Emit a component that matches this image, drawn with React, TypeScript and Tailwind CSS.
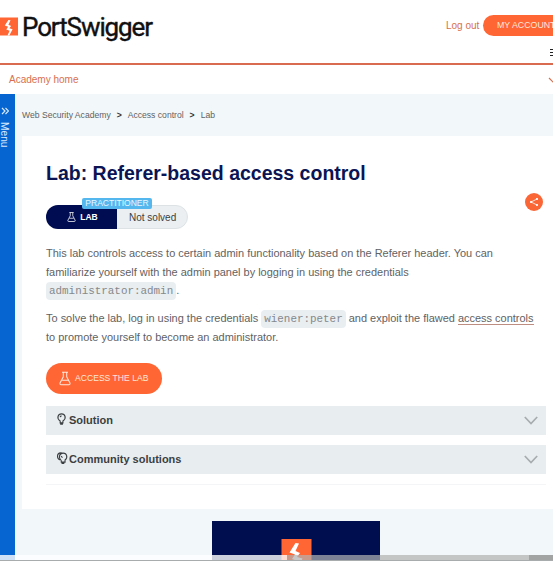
import React from "react";

const Bolt = ({ className }: { className: string }) => (
  <svg viewBox="0 0 30 30" className={className}>
    <rect width="30" height="30" fill="#ff6633" />
    <path d="M14 4 L17.500 4.500 L14 12 L18.500 14 L15.500 18 L21 19.500 L15.500 30 L12.500 30 L16 22 L10.500 20 L13.500 15.500 L8 13.500 Z" fill="#fff" />
  </svg>
);

const Flask = ({ className }: { className: string }) => (
  <svg viewBox="0 0 14 16" className={className} fill="none" stroke="currentColor" strokeWidth="1.2">
    <path d="M3.5 .8h7M5 1v5L1.2 13.2Q.7 15.2 2.5 15.2h9q1.8 0 1.3-2L9 6V1M3.5 10h7" />
  </svg>
);

const Bulb = ({ double = false }: { double?: boolean }) => (
  <svg viewBox="0 0 12 13" className="-mt-[3px] h-3 w-3 shrink-0" fill="none" stroke="#3c3f41" strokeWidth="1.200">
    {double ? (
      <path d="M3.6 8.7C0 6.5.4 1.2 4.4 1c1-.2 1.6.2 2 .5M5 9C1.800 6 3 1.500 7 1.200c4.500-.2 5.500 5 2.300 7.500V11H5.200V9M5.500 12.300h3M5 4.500l1.500 1.500" />
    ) : (
      <path d="M4 8.700C-.2 5.900 1.500 1 5.500 1s5.700 4.900 1.500 7.700v2H4zM4 12h3M4 4.500q.3-1.200 1.500-1.400" />
    )}
  </svg>
);

const Chevron = () => (
  <svg viewBox="0 0 14 9" className="h-[9px] w-3.5" fill="none" stroke="#a7acae" strokeWidth="1.700">
    <path d="M.8 1 7 7.500 13.200 1" />
  </svg>
);

const Panel = ({ label, double }: { label: string; double?: boolean }) => (
  <div className="flex h-[29px] w-[500px] items-center bg-[#e8edf0] pt-px pr-2 pl-[10px] text-[11px] font-bold text-[#3c3f41]">
    <Bulb double={double} />
    <span className="ml-[1px] flex-1">{label}</span>
    <Chevron />
  </div>
);

export default function App() {
  return (
    <div className="relative flex h-[561px] w-[553px] flex-col overflow-hidden bg-white font-['Liberation_Sans',Arial,sans-serif] whitespace-nowrap text-[#5f6264]">
      <header className="flex h-[65px] shrink-0 flex-col border-b-2 border-[#d96b50]">
        <div className="flex h-[50px] items-center">
          <Bolt className="mt-[2px] h-[19px] w-[18px] shrink-0" />
          <span className="mt-[3px] ml-[4px] w-[130px] shrink-0 font-['Roboto',sans-serif] text-[26px] leading-[30px] tracking-[-1.100px] text-[#111] [-webkit-text-stroke:0.400px_#111]">
            PortSwigger
          </span>
          <span className="ml-[294px] w-[37px] shrink-0 text-[10px] text-[#d8704f]">Log out</span>
          <div className="flex h-[21px] w-[90px] shrink-0 items-center rounded-full bg-[#ff6633] pt-px pl-[14px] text-[8.800px] text-[#ffe6db]">
            MY ACCOUNT
          </div>
        </div>
        <div className="mt-[-1px] ml-[550px] flex flex-col gap-[2px]">
          <i className="h-px w-3 bg-[#222]" />
          <i className="h-px w-3 bg-[#222]" />
          <i className="h-px w-3 bg-[#222]" />
        </div>
      </header>
      <nav className="flex h-[29px] shrink-0 items-center pl-[9px] text-[10px] text-[#d8704f]">
        <span className="w-[539px] shrink-0">Academy home</span>
        <svg viewBox="0 0 10 6" className="h-1.5 w-2.5 shrink-0" fill="none" stroke="#d8704f" strokeWidth="1.200">
          <path d="M1 1l4 4 4-4" />
        </svg>
      </nav>
      <div className="flex h-[467px] shrink-0 bg-[#f2f7f9]">
        <aside className="flex w-[15px] shrink-0 flex-col items-center bg-[#0765d1] pt-[13px] text-[#d6e9ff]">
          <svg viewBox="0 0 8 8" className="mr-[5px] h-2 w-2" fill="none" stroke="currentColor" strokeWidth="1.200">
            <path d="M1 1l3 3-3 3M4.500 1l3 3-3 3" />
          </svg>
          <span className="mt-[7px] mr-[8px] text-[10.200px] leading-[14px] [writing-mode:vertical-rl]">Menu</span>
        </aside>
        <main className="flex w-[538px] flex-col pl-[7px]">
          <div className="flex h-[42px] items-center text-[8.600px]">
            <span>Web Security Academy</span>
            <b className="mx-[6px] font-bold text-[#333]">&gt;</b>
            <span>Access control</span>
            <b className="mx-[6px] font-bold text-[#333]">&gt;</b>
            <span>Lab</span>
          </div>
          <section className="flex h-[373px] shrink-0 flex-col items-start bg-white pt-[25px] pl-[24px]">
            <h1 className="h-[24px] text-[19.500px] leading-[24px] font-bold text-[#0b1554]">
              Lab: Referer-based access control
            </h1>
            <div className="mt-[5px] flex w-[497px] items-start justify-between">
              <div className="relative mt-[15px] flex h-[24px] w-[142px] overflow-visible rounded-full border border-[#dde3e5] bg-[#eceff1]">
                <div className="-mt-px -ml-px flex h-[24px] w-[71px] items-center justify-center gap-[4px] rounded-l-full bg-[#000c52] pl-[2px] text-[8.500px] font-bold text-white">
                  <Flask className="h-[10px] w-[9px]" />
                  LAB
                </div>
                <span className="ml-[12px] text-[10px] leading-[23px] text-[#3b3e40]">Not solved</span>
                <span className="absolute -top-[8px] left-[35px] h-[11px] w-[70px] rounded-[2px] bg-[#54b8ef] text-center text-[8.500px] leading-[11px] text-[#e7f7ff]">
                  PRACTITIONER
                </span>
              </div>
              <div className="mt-[3px] flex size-[18px] items-center justify-center rounded-full bg-[#fb6637]">
                <svg viewBox="0 0 10 10" className="size-[10px]" stroke="#fff" fill="#fff">
                  <path d="M8 2 2 5l6 3" fill="none" strokeWidth=".8" />
                  <circle cx="8" cy="2" r=".7" />
                  <circle cx="2" cy="5" r=".7" />
                  <circle cx="8" cy="8" r=".7" />
                </svg>
              </div>
            </div>
            <p className="mt-[15px] text-[10.980px] leading-[18.500px]">
              This lab controls access to certain admin functionality based on the Referer header. You can
              <br />
              familiarize yourself with the admin panel by logging in using the credentials
              <br />
              <code className="rounded-[4px] bg-[#e9eef1] px-[3px] py-[3px] font-['Liberation_Mono',monospace] text-[10.900px] text-[#85898c]">administrator:admin</code>.
            </p>
            <p className="mt-[8px] text-[10.980px] leading-[18.500px]">
              To solve the lab, log in using the credentials{" "}
              <code className="rounded-[4px] bg-[#e9eef1] px-[3px] py-[3px] font-['Liberation_Mono',monospace] text-[10.900px] text-[#85898c]">wiener:peter</code>{" "}
              and exploit the flawed <span className="border-b border-[#bd8d82]">access controls</span>
              <br />
              to promote yourself to become an administrator.
            </p>
            <div className="mt-[16px] flex h-[31px] w-[116px] shrink-0 items-center gap-[4px] rounded-full bg-[#ff6633] pl-[13px] text-[8.600px] text-[#ffe6db]">
              <Flask className="h-[15px] w-[12px]" />
              ACCESS THE LAB
            </div>
            <div className="mt-[12px] flex flex-col gap-[10px] border-b border-[#f3f5f6] pb-[10px]">
              <Panel label="Solution" />
              <Panel label="Community solutions" double />
            </div>
          </section>
          <div className="mt-[12px] ml-[190px] flex h-[40px] w-[168px] shrink-0 justify-center bg-[#000e50] pt-[18px]">
            <Bolt className="h-[30px] w-[31px]" />
          </div>
        </main>
      </div>
      <div className="absolute bottom-0 left-0 flex h-[6px] w-full border-b border-[#a9acad]">
        <div className="w-[287px] bg-white/80" />
        <div className="w-[242px] bg-[#b2b2b2]/71" />
        <div className="flex-1 bg-[#808080]/70" />
      </div>
    </div>
  );
}
